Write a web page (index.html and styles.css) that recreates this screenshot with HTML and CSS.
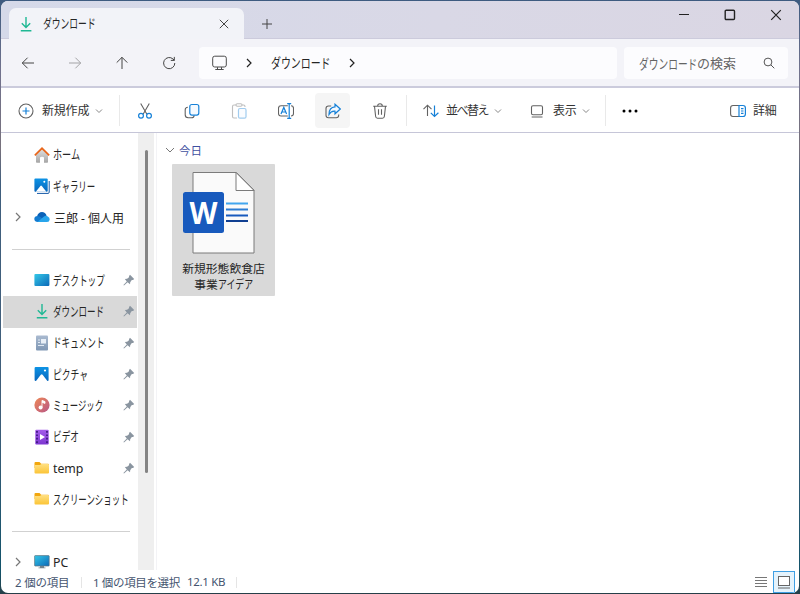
FILE: index.html
```
<!DOCTYPE html>
<html lang="ja">
<head>
  <meta charset="UTF-8" />
  <meta name="viewport" content="width=device-width, initial-scale=1.0" />
  <title>ダウンロード</title>
  <link rel="stylesheet" href="styles.css">
</head>
<body>
  <!-- Degradados y símbolos compartidos -->
  <svg class="defs" width="0" height="0" aria-hidden="true">
    <defs>
      <linearGradient id="gBlue" x1="0" y1="0" x2="1" y2="1"><stop offset="0" stop-color="#35c8e8"/><stop offset="1" stop-color="#0b69b8"/></linearGradient>
      <linearGradient id="gPic" x1="0" y1="0" x2="0" y2="1"><stop offset="0" stop-color="#0d93e5"/><stop offset="1" stop-color="#0867bd"/></linearGradient>
      <linearGradient id="gHome" x1="0" y1="0" x2="0" y2="1"><stop offset="0" stop-color="#e0e0e0"/><stop offset="1" stop-color="#a5a5a5"/></linearGradient>
      <linearGradient id="gMusic" x1="0" y1="0" x2="1" y2="1"><stop offset="0" stop-color="#ef8955"/><stop offset="1" stop-color="#b75788"/></linearGradient>
      <linearGradient id="gVideo" x1="0" y1="0" x2="0" y2="1"><stop offset="0" stop-color="#a45bea"/><stop offset="1" stop-color="#7d36d0"/></linearGradient>
      <linearGradient id="gFolder" x1="0" y1="0" x2="0" y2="1"><stop offset="0" stop-color="#ffe083"/><stop offset="1" stop-color="#fbc436"/></linearGradient>
      <linearGradient id="gDoc" x1="0" y1="0" x2="0" y2="1"><stop offset="0" stop-color="#a9bad0"/><stop offset="1" stop-color="#7f97b4"/></linearGradient>
    </defs>
    <symbol id="download" viewBox="0 0 16 16"><path d="M8 1v10M3.8 7.2 8 11.4l4.2-4.2M2.8 14.7h10.6" fill="none" stroke="#1fb894" stroke-width="1.4"/></symbol>
    <symbol id="picture" viewBox="0 0 16 16"><rect x=".6" y="1" width="14" height="14" rx="1" fill="url(#gPic)"/><path d="M2 15 6.8 8.8q.9-1 1.8 0L13.4 15z" fill="#fff"/><circle cx="11" cy="4.5" r="1.1" fill="#fff"/></symbol>
    <symbol id="folder" viewBox="0 0 16 16"><path d="M.5 3q0-1 1-1h4l1.7 1.7H14q1 0 1 1V8H.5z" fill="#f2a60d"/><path d="M.5 5h5.4L7.5 4H14q1 0 1 1v7.5q0 1-1 1H1.5q-1 0-1-1z" fill="url(#gFolder)"/></symbol>
    <symbol id="pin" viewBox="0 0 12 12"><path d="M7 .8 11.2 5 10 6 8.8 6.1 7.2 8.2 7 10.2 4.6 8.2 1 11.5l-.6-.6L3.8 7.4 1.8 5l2.3-.2L6 3.2l.1-1.3z" fill="#8a95a0"/></symbol>
    <symbol id="down" viewBox="0 0 8 8"><path d="m1 2.5 3 3 3-3" fill="none" stroke="#888" stroke-width="1"/></symbol>
    <symbol id="right" viewBox="0 0 8 10"><path d="m2 1 4 4-4 4" fill="none" stroke="currentColor" stroke-width="1.2"/></symbol>
  </svg>

  <div class="window">
    <header class="titlebar">
      <div class="tab">
        <svg class="i16"><use href="#download"/></svg>
        <span class="tab-title"><span class="kana k-tab">ダウンロード</span></span>
        <svg class="tab-close" viewBox="0 0 10 10"><path d="m.8.8 8.4 8.4M9.2.8.8 9.2"/></svg>
      </div>
      <svg class="new-tab" viewBox="0 0 10 10"><path d="M5 0v10M0 5h10"/></svg>
      <div class="win-buttons">
        <svg viewBox="0 0 12 12"><path d="M1 5.5h10" stroke-width="1"/></svg>
        <svg viewBox="0 0 12 12"><rect x="1.2" y="1.2" width="9.3" height="9.3" rx="1" stroke-width="1.4"/></svg>
        <svg viewBox="0 0 12 12"><path d="m1.2 1.2 9.6 9.6M10.8 1.2 1.2 10.8" stroke-width="1.2"/></svg>
      </div>
    </header>

    <nav class="navbar">
      <div class="nav-buttons">
        <svg viewBox="0 0 14 14"><path d="M13 7H1.3M6.6 1.7 1.3 7l5.3 5.3"/></svg>
        <svg class="off" viewBox="0 0 14 14"><path d="M1 7h11.7M7.4 1.7 12.7 7l-5.3 5.3"/></svg>
        <svg viewBox="0 0 14 14"><path d="M7 13V1.3M1.7 6.6 7 1.3l5.3 5.3"/></svg>
        <svg viewBox="0 0 14 14"><path d="M12.8 7A5.6 5.6 0 1 1 11 3l1.3 1.3M12.3.9v3.5H8.8"/></svg>
      </div>
      <div class="address">
        <svg class="pc" viewBox="0 0 16 16"><rect x="1.2" y="1.2" width="13.6" height="10.8" rx="2"/><path d="M6 12.2v2M10 12.2v2M3.8 14.5h8.4"/></svg>
        <svg class="crumb"><use href="#right"/></svg>
        <span class="crumb-name"><span class="kana k-crumb">ダウンロード</span></span>
        <svg class="crumb last"><use href="#right"/></svg>
      </div>
      <div class="search">
        <span class="search-text"><span class="kana k-search">ダウンロード</span><span class="search-rest">の検索</span></span>
        <svg viewBox="0 0 12 12"><circle cx="5" cy="5" r="3.9"/><path d="m7.9 7.9 3.4 3.4"/></svg>
      </div>
    </nav>

    <div class="toolbar">
      <div class="tool new">
        <svg class="i16" viewBox="0 0 16 16"><circle cx="8" cy="8" r="7" class="g"/><path d="M8 4.5v7M4.5 8h7" class="b"/></svg>
        <span>新規作成</span><svg class="i8"><use href="#down"/></svg>
      </div>
      <i class="sep"></i>
      <div class="icons">
        <div class="cell"><svg class="i16" viewBox="0 0 16 16"><path d="m3.7.5 6.2 10.8M12.3.5 6.1 11.3" class="g"/><circle cx="4" cy="12.7" r="2.4" class="b"/><circle cx="12" cy="12.7" r="2.4" class="b"/></svg></div>
        <div class="cell"><svg class="i16" viewBox="0 0 16 16"><path d="M3.8 4.2q-2.6.2-2.6 2.6v5q0 3 3 3h3.2q2.6 0 2.8-2.4" class="g"/><rect x="5.8" y="1.5" width="9" height="10.6" rx="2" class="b pale"/></svg></div>
        <div class="cell off"><svg class="i16" viewBox="0 0 16 16"><path d="M5 2H3Q1.5 2 1.5 3.5v10Q1.5 15 3 15h3M11 2h1.5Q14 2 14 3.5V4" class="g"/><rect x="5" y=".7" width="6" height="2.5" rx="1.2" class="g"/><rect x="7.5" y="5.5" width="7.5" height="9.7" rx="1.5" class="b pale"/></svg></div>
        <div class="cell"><svg class="i16" viewBox="0 0 16 16"><path d="M9.8 2.8H3q-2.5 0-2.5 2.5v5.2Q.5 13 3 13h6.8M13 2.8q2.5 0 2.5 2.5v5.2q0 2.5-2.5 2.5" class="g"/><path d="m3 11 2.8-6.6L8.6 11M4 9h3.6M9.2.6h4M9.2 15.4h4M11.2.6v14.8" class="b"/></svg></div>
        <div class="cell active"><svg class="i16" viewBox="0 0 16 16"><path d="M6.2 3H3.5Q1 3 1 5.5v6.7q0 2.5 2.5 2.5h7.7q2.5 0 2.5-2.5v-.8" class="g"/><path d="M10 1.2 15.3 6 10 10.8V8.2Q6 7.8 4 11.4 4 4.3 10 3.9z" class="b pale"/></svg></div>
        <div class="cell"><svg class="i16" viewBox="0 0 16 16"><path d="M1.2 3.2h13.6M5.7 3q0-2.3 2.3-2.3T10.3 3M2.5 3.2l1.1 10q.2 2 2 2h4.8q1.8 0 2-2l1.1-10M6.5 6.3v5.4M9.5 6.3v5.4" class="g"/></svg></div>
      </div>
      <i class="sep"></i>
      <div class="tool sort">
        <svg class="i16" viewBox="0 0 16 16"><path d="M4.5 13V2.2M.5 6.2l4-4 4 4" class="g"/><path d="M11.5 2.5v11M7.8 9.8l3.7 3.7 3.9-3.7" class="b"/></svg>
        <span>並べ替え</span><svg class="i8"><use href="#down"/></svg>
      </div>
      <div class="tool view">
        <svg class="i16" viewBox="0 0 16 16"><rect x="2.5" y="2.7" width="11" height="9" rx="1.5" class="g"/><path d="M2.7 14h10.8" class="g"/></svg>
        <span>表示</span><svg class="i8"><use href="#down"/></svg>
      </div>
      <i class="sep"></i>
      <svg class="more" viewBox="0 0 16 4"><circle cx="2" cy="2" r="1.5"/><circle cx="8" cy="2" r="1.5"/><circle cx="14" cy="2" r="1.5"/></svg>
      <div class="tool details">
        <svg class="i16" viewBox="0 0 16 16"><path d="M9 2.5H3Q.6 2.5.6 5v6q0 2.5 2.4 2.5h6" class="g"/><path d="M9 2.5h4q2.4 0 2.4 2.5v6q0 2.5-2.4 2.5H9zM11 5.6h2.5M11 8h2.5M11 10.4h2.5" class="b"/></svg>
        <span>詳細</span>
      </div>
    </div>

    <main class="content">
      <aside class="sidebar">
        <ul class="tree">
          <li><svg class="i16" viewBox="0 0 16 16"><path d="M2 8 8 2.5 14 8v7q0 .8-.8.8H10v-5q0-1-2-1t-2 1v5H2.8q-.8 0-.8-.8z" fill="url(#gHome)"/><path d="m.8 8.3 7.2-7 7.2 7" fill="none" stroke="#e8661b" stroke-width="1.7"/></svg><span class="kana k-home">ホーム</span></li>
          <li><svg class="i16" viewBox="0 0 16 16"><path d="M15.2 3v11.2q0 1.2-1.2 1.2H3" fill="none" stroke="#1257a5" stroke-width="1"/><rect x=".4" y=".4" width="13.3" height="13.3" rx="1" fill="url(#gPic)"/><path d="M1.8 13.7 6.4 8q.7-.8 1.4 0l4.6 5.7z" fill="#fff"/><circle cx="10.3" cy="3.7" r="1" fill="#fff"/></svg><span class="kana k-gallery">ギャラリー</span></li>
          <li><svg class="arrow"><use href="#right"/></svg><svg class="i16" viewBox="0 0 16 16"><path d="M3 7.5Q4.2 3 8 3q3.3 0 4.6 3.5L9 10z" fill="#0b62b8"/><path d="M4 13Q.4 13 .3 10q0-2.8 3.4-3 2 0 3.3 1.5L13 13z" fill="#137bd0"/><path d="M3.5 13 10 7.5q2-1.5 3.8 0 2 1 1.9 2.9Q15.5 13 13 13z" fill="#28a5eb"/></svg><span class="one">三郎 - 個人用</span></li>
          <li class="line"></li>
          <li><svg class="i16" viewBox="0 0 16 16"><rect x=".4" y="2" width="15" height="12" rx="1" fill="url(#gBlue)"/></svg><span class="kana k-desk">デスクトップ</span><svg class="pin"><use href="#pin"/></svg></li>
          <li class="selected"><svg class="i16"><use href="#download"/></svg><span class="kana k-down">ダウンロード</span><svg class="pin"><use href="#pin"/></svg></li>
          <li><svg class="i16" viewBox="0 0 16 16"><rect x="2" y=".6" width="12" height="15" rx="1" fill="url(#gDoc)"/><rect x="7" y="4" width="5" height="4.5" fill="#e8eff7"/><path d="M4 5h2M4 7.5h2M4 10.5h6" stroke="#dfe8f2"/></svg><span class="kana k-doc">ドキュメント</span><svg class="pin"><use href="#pin"/></svg></li>
          <li><svg class="i16"><use href="#picture"/></svg><span class="kana k-pic">ピクチャ</span><svg class="pin"><use href="#pin"/></svg></li>
          <li><svg class="i16" viewBox="0 0 16 16"><circle cx="8" cy="8" r="7.6" fill="url(#gMusic)"/><circle cx="6.6" cy="10.5" r="2" fill="#fff"/><path d="M8 10.5V3.4l3 1.2v1.8L8 5.3" fill="#fff" stroke="#fff" stroke-width=".9"/></svg><span class="kana k-music">ミュージック</span><svg class="pin"><use href="#pin"/></svg></li>
          <li><svg class="i16" viewBox="0 0 16 16"><rect x="1.3" y=".8" width="13.4" height="14.6" rx="1" fill="url(#gVideo)"/><path d="M3 2v13M13 2v13" stroke="#3b177d" stroke-width="1.7" stroke-dasharray="1.7 1.7"/><path d="m6 5 5 3-5 3z" fill="#fff"/></svg><span class="kana k-video">ビデオ</span><svg class="pin"><use href="#pin"/></svg></li>
          <li><svg class="i16"><use href="#folder"/></svg><span class="temp">temp</span><svg class="pin"><use href="#pin"/></svg></li>
          <li><svg class="i16"><use href="#folder"/></svg><span class="kana k-shot">スクリーンショット</span></li>
          <li class="line"></li>
          <li><svg class="arrow"><use href="#right"/></svg><svg class="i16" viewBox="0 0 16 16"><rect x=".6" y="1.6" width="14.6" height="10.4" rx=".6" fill="url(#gBlue)" stroke="#617481" stroke-width=".7"/><path d="M6 12h4v1.5h1.5v.8h-7v-.8H6z" fill="#75838b"/></svg><span class="pc-name">PC</span></li>
        </ul>
        <div class="scrollbar"><div class="thumb"></div></div>
      </aside>

      <section class="files">
        <div class="group"><svg viewBox="0 0 10 8"><path d="m1 2 4 4 4-4"/></svg><span>今日</span></div>
        <div class="file">
          <svg viewBox="0 0 74 84">
            <path d="M11 1.5h43.5L72 19v63H11z" fill="#fafafa" stroke="#7b7b7b"/>
            <path d="M54 1.5V19.5h18z" fill="#fff" stroke="#7b7b7b"/>
            <path d="M44 32.5h22" stroke="#41a5ee" stroke-width="2"/>
            <path d="M44 38.5h22" stroke="#2b7cd3" stroke-width="2"/>
            <path d="M44 44.5h22" stroke="#185abd" stroke-width="2"/>
            <path d="M44 50h22" stroke="#103f91" stroke-width="2"/>
            <rect x="1" y="21" width="41" height="41" rx="2.5" fill="#185abd"/>
            <text x="21.5" y="53" text-anchor="middle" textLength="28" lengthAdjust="spacingAndGlyphs">W</text>
          </svg>
          <p>新規形態飲食店</p>
          <p>事業<span class="kana k-idea">アイデア</span></p>
        </div>
      </section>
    </main>

    <footer class="status">
      <span class="count">2 個の項目</span><i></i>
      <span class="chosen">1 個の項目を選択</span><span class="size">12.1 KB</span><i></i>
      <div class="modes">
        <svg class="list" viewBox="0 0 12 12"><path d="M0 1.5h12M0 4.5h12M0 7.5h12M0 10.5h12"/></svg>
        <div class="mode-on"><svg viewBox="0 0 14 14"><rect x="1.5" y="1.5" width="11" height="9"/><path d="M1 13h12"/></svg></div>
      </div>
    </footer>
  </div>
</body>
</html>
```

FILE: styles.css
```
:root {
  --texto: #252525;
  --gris: #626262;
  --azul: #1681d8;
  --borde: #cbcbdc;
}

* {
  box-sizing: border-box;
}

body {
  margin: 0;
  height: 594px;
  padding: 1px;
  overflow: hidden;
  background: linear-gradient(#3d5b80, #71728d 12%, #77717c 25%, #405e7d 31%, #405e7a 70%, #12536a 96%, #263f48);
  font-family: "Noto Sans", "Noto Sans CJK JP", sans-serif;
  font-size: 12px;
  color: var(--texto);
}

svg {
  display: block;
  flex: none;
}

.defs {
  position: absolute;
}

.window {
  height: 592px;
  display: flex;
  flex-direction: column;
  background: #fff;
  border-radius: 7px;
  overflow: hidden;
}

/* los kana se estrechan como en la fuente de la interfaz */
.kana {
  display: inline-block;
  transform-origin: left center;
  white-space: nowrap;
  font-family: "Noto Sans CJK JP", sans-serif;
  font-size: 13px;
  line-height: 16px;
}

.i16 {
  width: 16px;
  height: 16px;
}

.i8 {
  width: 8px;
  height: 8px;
}

.g, .b {
  fill: none;
  stroke: var(--gris);
  stroke-width: 1.1;
}

.b {
  stroke: var(--azul);
  stroke-width: 1.2;
}

.pale {
  fill: #f5faff;
}

/* barra de título */
.titlebar {
  height: 38px;
  flex: none;
  display: flex;
  padding: 7px 0 0 8px;
  background: linear-gradient(90deg, #d5d9e9, #d9d8e6 55%, #dad6e3);
  border-bottom: 1px solid #cccbdc;
}

.tab {
  width: 235px;
  height: 31px;
  display: flex;
  align-items: center;
  padding: 0 15px 0 9px;
  background: #f2f3f8;
  border-radius: 7px 7px 0 0;
}

.tab-title {
  width: 164px;
  margin-left: 9px;
  margin-right: 12px;
}

.tab-close, .new-tab {
  width: 10px;
  height: 10px;
  fill: none;
  stroke: #444;
}

.new-tab {
  margin: 11px 0 0 18px;
}

.win-buttons {
  display: flex;
  gap: 34px;
  margin: 1px 17px 0 auto;
}

.win-buttons svg {
  width: 12px;
  height: 12px;
  fill: none;
  stroke: #222;
}

/* navegación */
.navbar {
  height: 49px;
  flex: none;
  display: flex;
  align-items: center;
  padding: 0 11px 0 20px;
  background: #f3f3f8;
  border-bottom: 2px solid var(--borde);
}

.nav-buttons {
  width: 178px;
  display: flex;
  gap: 33px;
}

.nav-buttons svg {
  width: 14px;
  height: 14px;
  fill: none;
  stroke: #444;
}

.nav-buttons .off {
  opacity: 0.45;
}

.address, .search {
  height: 32px;
  display: flex;
  align-items: center;
  background: #fcfcfe;
  border-radius: 4px;
}

.address {
  width: 418px;
  padding-left: 12px;
}

.pc {
  width: 17px;
  height: 16px;
  fill: none;
  stroke: #4b4b4b;
}

.crumb {
  width: 8px;
  height: 10px;
  color: #222;
  margin-left: 17px;
}

.crumb.last {
  margin-left: 15px;
}

.crumb-name {
  width: 60px;
  margin-left: 18px;
  margin-right: 2px;
  white-space: nowrap;
}

.search {
  width: 164px;
  margin-left: 7px;
  padding: 0 13px 0 15px;
  justify-content: space-between;
  color: #646464;
  font-size: 13px;
}

.search-text {
  display: flex;
  align-items: center;
  line-height: 16px;
}

.search-rest {
  margin-left: 1px;
}

.search svg {
  width: 12px;
  height: 12px;
  fill: none;
  stroke: #555;
}

/* comandos */
.toolbar {
  height: 45px;
  flex: none;
  display: flex;
  align-items: center;
  padding: 0 22px 0 17px;
  border-bottom: 1px solid #c6c6d8;
}

.tool {
  display: flex;
  align-items: center;
  white-space: nowrap;
  line-height: 16px;
  color: #333;
}

.tool span {
  margin-left: 8px;
  margin-right: 5px;
  padding-top: 2px;
}

.tool > svg {
  margin-top: 1px;
}

.new {
  width: 101px;
}

.new span {
  width: 48px;
  letter-spacing: -0.2px;
}

.sep {
  width: 1px;
  height: 31px;
  background: #e9e9e9;
}

.icons {
  width: 286px;
  display: flex;
  gap: 12px;
  padding-left: 7px;
}

.cell {
  width: 35px;
  height: 35px;
  display: grid;
  place-items: center;
  border-radius: 4px;
}

.cell svg {
  margin-top: 1px;
}

.cell.active {
  background: #f5f5f5;
}

.cell.off {
  opacity: 0.4;
}

.sort {
  width: 107px;
  padding-left: 16px;
}

.sort span {
  width: 43px;
  margin-left: 7px;
  letter-spacing: -1.5px;
}

.view {
  width: 91px;
  padding-left: 15px;
}

.view span {
  width: 24px;
  letter-spacing: -0.3px;
}

.more {
  width: 16px;
  height: 4px;
  margin: 2px 0 0 16px;
}

.details {
  margin-left: auto;
}

.details span {
  width: 24px;
  margin-left: 7px;
  margin-right: 0;
  letter-spacing: -0.3px;
}

/* panel lateral */
.content {
  flex: 1;
  min-height: 0;
  display: flex;
}

.sidebar {
  width: 156px;
  height: 437px;
  flex: none;
  display: flex;
  border-right: 1px solid #f3f3f6;
}

.tree {
  width: 137px;
  margin: 0;
  padding: 6.5px 0 0;
  list-style: none;
}

.tree li {
  position: relative;
  height: 31.35px;
  display: flex;
  align-items: center;
  margin-left: 2px;
  padding-left: 31px;
  white-space: nowrap;
}

.tree li > svg {
  margin-bottom: 1px;
}

.tree li > span {
  margin-left: 3px;
}

.tree .kana {
  margin-bottom: 2px;
}

.tree .one {
  margin-left: 4px;
}

.tree .temp, .tree .pc-name {
  font-size: 12.3px;
}

.tree .selected {
  background: #d9d9d9;
  margin-right: 1px;
}

.tree .line::before {
  content: "";
  width: 118px;
  height: 1px;
  margin-left: -22px;
  background: #d1d1d1;
}

.arrow {
  width: 8px;
  height: 10px;
  margin-left: -20px;
  margin-right: 12px;
  color: #777;
}

.pin {
  position: absolute;
  right: 3px;
  width: 12px;
  height: 12px;
}

.tree .selected .pin {
  right: 2px;
}

.scrollbar {
  width: 16px;
  flex: none;
  padding: 17px 6px 0 7px;
  background: #efefef;
}

.thumb {
  height: 323px;
  background: #838383;
  border-radius: 2px;
}

/* archivos */
.files {
  padding: 10px 0 0 8px;
}

.group {
  height: 14px;
  display: flex;
  align-items: center;
  gap: 4px;
  color: #3f4fa0;
  font-size: 11.5px;
}

.group svg {
  width: 10px;
  height: 8px;
  fill: none;
  stroke: #777;
}

.file {
  width: 103px;
  height: 132px;
  margin: 7px 0 0 7px;
  padding-top: 7px;
  background: #d9d9d9;
  border-radius: 1px;
}

.file svg {
  width: 74px;
  height: 84px;
  margin: 0 0 5px 10px;
}

.file text {
  font: bold 31px "Open Sans", sans-serif;
  fill: #fff;
}

.file p {
  display: flex;
  justify-content: center;
  align-items: center;
  height: 16px;
  margin: 0;
  line-height: 14px;
  white-space: nowrap;
  font-family: "Noto Sans CJK JP", sans-serif;
  font-size: 11.8px;
}

/* barra de estado */
.status {
  height: 22px;
  flex: none;
  display: flex;
  align-items: center;
  padding-left: 14px;
  color: #44546f;
  white-space: nowrap;
  font-size: 11.5px;
}

.status span {
  padding-bottom: 1px;
}

.status i {
  width: 1px;
  height: 11px;
  background: #e5e5e5;
}

.count {
  width: 66px;
  letter-spacing: -0.2px;
}

.chosen {
  width: 94px;
  margin-left: 11px;
  letter-spacing: -0.35px;
}

.size {
  width: 49px;
  letter-spacing: -0.3px;
}

.modes {
  display: flex;
  align-items: center;
  gap: 6px;
  margin: 0 4px 0 auto;
}

.list {
  width: 12px;
  height: 12px;
  stroke: #777;
}

.mode-on {
  width: 22px;
  height: 22px;
  display: grid;
  place-items: center;
  background: #e5f3fc;
  border: 1px solid #3f9fe4;
}

.mode-on svg {
  width: 14px;
  height: 14px;
  fill: #fff;
  stroke: #666;
}

/* anchos de cada rótulo */
.k-tab { transform: scaleX(0.675); }
.k-crumb { font-size: 13.5px; transform: scaleX(0.735); }
.k-search { width: 57px; font-size: 13.5px; transform: scaleX(0.72); }
.k-home { transform: scaleX(0.7); }
.k-gallery { transform: scaleX(0.65); }
.k-desk { transform: scaleX(0.665); }
.k-down { transform: scaleX(0.655); }
.k-doc { transform: scaleX(0.66); }
.k-pic { transform: scaleX(0.675); }
.k-music { transform: scaleX(0.645); }
.k-video { transform: scaleX(0.665); }
.k-shot { transform: scaleX(0.65); }
.k-idea { width: 35px; font-size: 12px; line-height: 14px; transform: scaleX(0.74); }
```
